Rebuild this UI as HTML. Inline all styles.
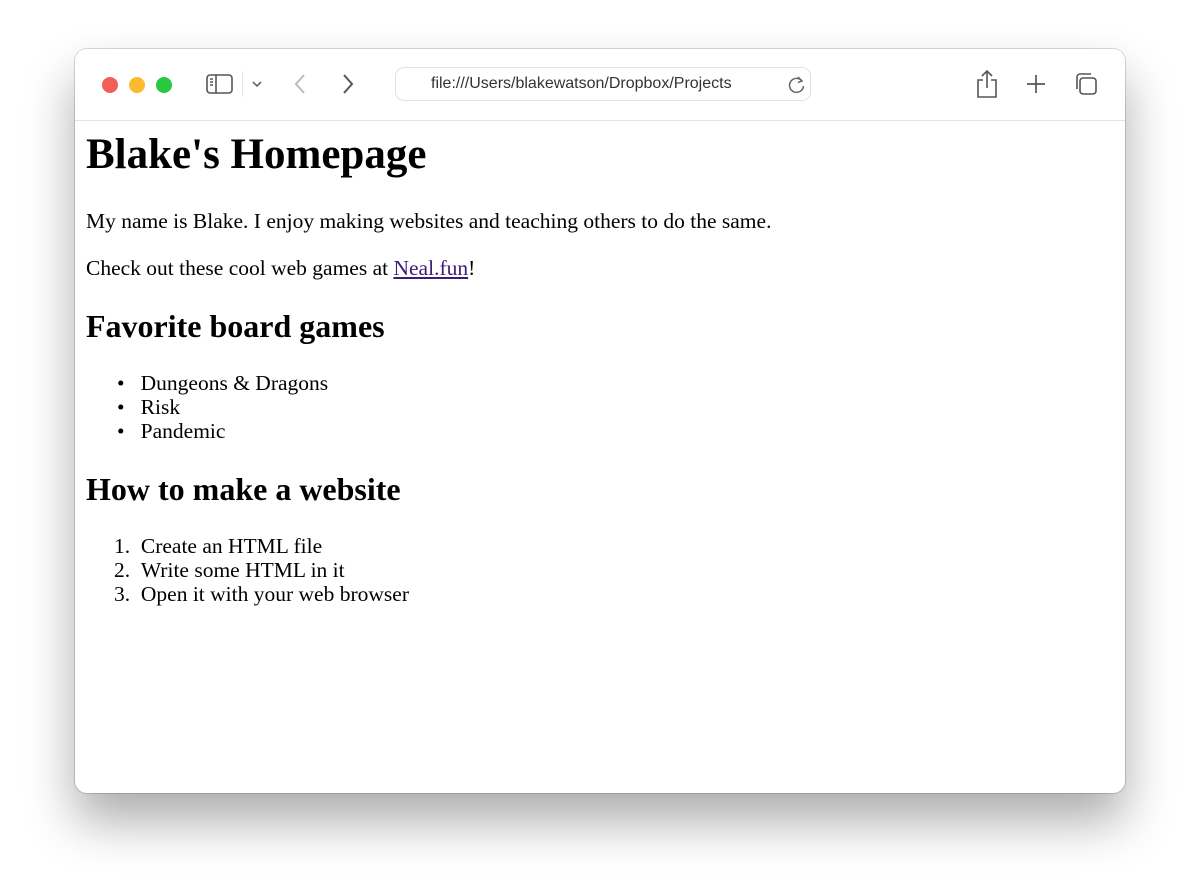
<!DOCTYPE html>
<html><head><meta charset="utf-8"><style>
html,body{margin:0;padding:0;background:#fff;width:1200px;height:893px;overflow:hidden;position:relative}
.win{position:absolute;left:75px;top:49px;width:1050px;height:744px;border-radius:12px;background:#fff;box-shadow:0 28px 50px rgba(0,0,0,.33),0 0 0 1px rgba(0,0,0,.15);overflow:hidden}
.bar{position:absolute;left:0;top:0;width:100%;height:71px;background:#fff;border-bottom:1px solid #e3e3e3}
.dot{position:absolute;top:28px;width:16px;height:16px;border-radius:50%}
.url{position:absolute;left:320px;top:18px;width:416px;height:34px;border:1px solid #e2e2e2;border-radius:9px;box-sizing:border-box;font:16px "Liberation Sans",sans-serif;color:#333;line-height:32px;padding-left:35px;overflow:hidden;white-space:nowrap}
.t{position:absolute;left:11px;font-family:"Liberation Serif",serif;color:#000;white-space:nowrap;font-size:21.5px;line-height:24px}
h1,h2{margin:0}
a{color:#3b1a7a;text-decoration:underline}
svg{position:absolute}
</style></head><body>
<div class="win">
<div class="bar">
<div class="dot" style="left:27px;background:#f25f58"></div>
<div class="dot" style="left:54px;background:#fbbb2e"></div>
<div class="dot" style="left:81px;background:#29c840"></div>
<svg style="left:131px;top:24px" width="28" height="22" viewBox="0 0 28 22" fill="none" stroke="#555" stroke-width="1.6"><rect x="1" y="2" width="25" height="18" rx="3"/><line x1="10" y1="2" x2="10" y2="20"/><line x1="4" y1="6" x2="7" y2="6"/><line x1="4" y1="9" x2="7" y2="9"/><line x1="4" y1="12" x2="7" y2="12"/></svg>
<div style="position:absolute;left:167px;top:22px;width:1px;height:26px;background:#e6e6e6"></div>
<svg style="left:176px;top:31px" width="12" height="8" viewBox="0 0 12 8" fill="none" stroke="#666" stroke-width="1.6"><path d="M2 2l4 4 4-4"/></svg>
<svg style="left:218px;top:24px" width="14" height="22" viewBox="0 0 14 22" fill="none" stroke="#bbb" stroke-width="2"><path d="M11 2L3 11l8 9"/></svg>
<svg style="left:266px;top:24px" width="14" height="22" viewBox="0 0 14 22" fill="none" stroke="#555" stroke-width="2"><path d="M3 2l8 9-8 9"/></svg>
<div class="url">file:///Users/blakewatson/Dropbox/Projects</div>
<svg style="left:712px;top:26px" width="20" height="20" viewBox="0 0 20 20" fill="none" stroke="#666" stroke-width="1.5"><path d="M15 6a7 7 0 1 0 1.5 5"/><path d="M11 2l4 4-4 1.5"/></svg>
<svg style="left:900px;top:20px" width="24" height="30" viewBox="0 0 24 30" fill="none" stroke="#555" stroke-width="1.6"><path d="M8 11H3v17h18V11h-5"/><path d="M12 19V2M7 7l5-5 5 5"/></svg>
<svg style="left:950px;top:24px" width="22" height="22" viewBox="0 0 22 22" fill="none" stroke="#555" stroke-width="1.7"><path d="M11 2v18M2 11h18"/></svg>
<svg style="left:998px;top:22px" width="26" height="26" viewBox="0 0 26 26" fill="none" stroke="#555" stroke-width="1.6"><rect x="7" y="7" width="16" height="16" rx="3"/><path d="M4 18V6a3 3 0 0 1 3-3h11"/></svg>
</div>
<div class="t" style="top:82px;line-height:48px"><h1 style="font-size:43px;line-height:48px">Blake's Homepage</h1></div>
<div class="t" style="top:160px">My name is Blake. I enjoy making websites and teaching others to do the same.</div>
<div class="t" style="top:207px">Check out these cool web games at <a>Neal.fun</a>!</div>
<div class="t" style="top:260px;line-height:34px"><h2 style="font-size:32px;line-height:34px">Favorite board games</h2></div>
<div class="t" style="left:42px;top:322px">•&nbsp;&nbsp;&nbsp;Dungeons &amp; Dragons<br>•&nbsp;&nbsp;&nbsp;Risk<br>•&nbsp;&nbsp;&nbsp;Pandemic</div>
<div class="t" style="top:423px;line-height:34px"><h2 style="font-size:32px;line-height:34px">How to make a website</h2></div>
<div class="t" style="left:39px;top:485px">1.&nbsp;&nbsp;Create an HTML file<br>2.&nbsp;&nbsp;Write some HTML in it<br>3.&nbsp;&nbsp;Open it with your web browser</div>
</div>
</body></html>
